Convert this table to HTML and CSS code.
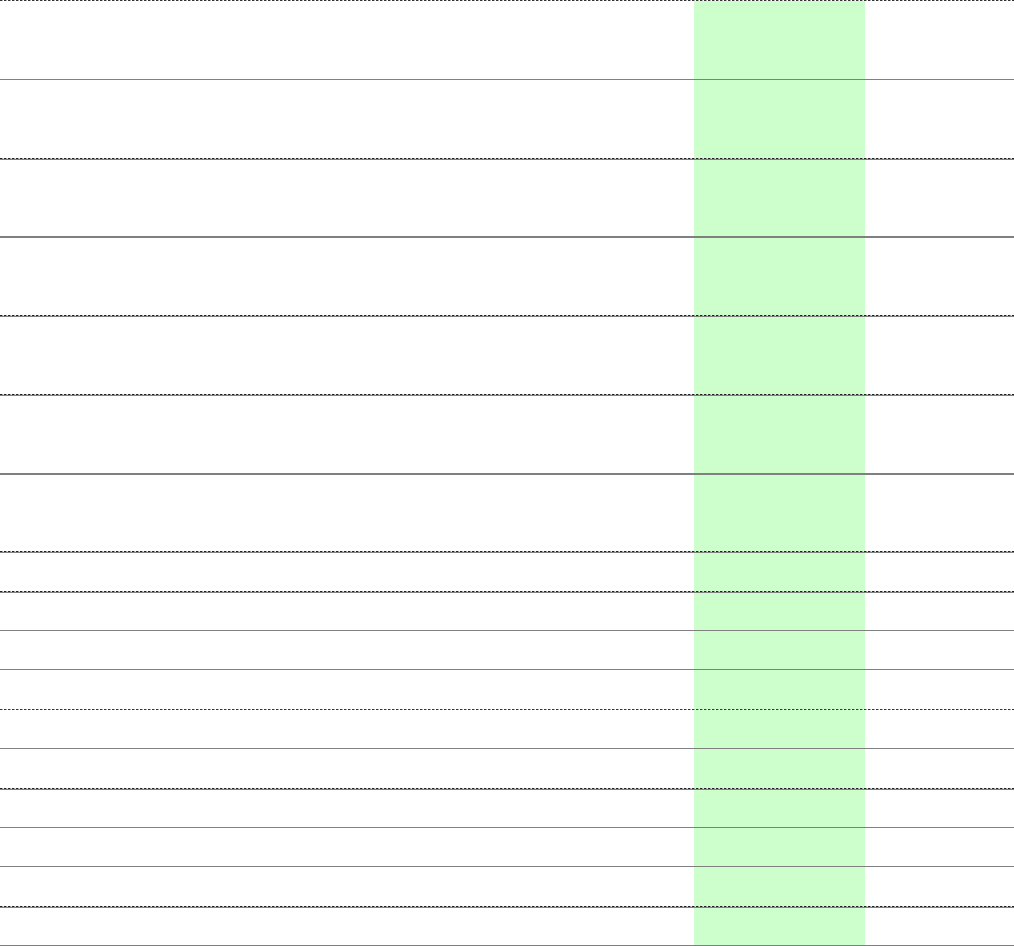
FILE: index.html
```html
<!DOCTYPE html>
<html>
<head>
<meta charset="utf-8">
<link rel="stylesheet" href="styles.css">
</head>
<body>
<div class="table">
  <div class="row tall"><div class="line dash"></div><div class="cells"><div></div><div class="mid"></div><div></div></div></div>
  <div class="row tall"><div class="line solid"></div><div class="cells"><div></div><div class="mid"></div><div></div></div></div>
  <div class="row tall"><div class="line dash-solid"></div><div class="cells"><div></div><div class="mid"></div><div></div></div></div>
  <div class="row tall"><div class="line solid2"></div><div class="cells"><div></div><div class="mid"></div><div></div></div></div>
  <div class="row tall"><div class="line dash-solid"></div><div class="cells"><div></div><div class="mid"></div><div></div></div></div>
  <div class="row tall"><div class="line dash-solid"></div><div class="cells"><div></div><div class="mid"></div><div></div></div></div>
  <div class="row tall"><div class="line solid2"></div><div class="cells"><div></div><div class="mid"></div><div></div></div></div>
  <div class="row short"><div class="line dash-solid"></div><div class="cells"><div></div><div class="mid"></div><div></div></div></div>
  <div class="row short"><div class="line dash-solid"></div><div class="cells"><div></div><div class="mid"></div><div></div></div></div>
  <div class="row short"><div class="line solid"></div><div class="cells"><div></div><div class="mid"></div><div></div></div></div>
  <div class="row short"><div class="line solid"></div><div class="cells"><div></div><div class="mid"></div><div></div></div></div>
  <div class="row short"><div class="line dash"></div><div class="cells"><div></div><div class="mid"></div><div></div></div></div>
  <div class="row short"><div class="line solid"></div><div class="cells"><div></div><div class="mid"></div><div></div></div></div>
  <div class="row short"><div class="line dash-solid"></div><div class="cells"><div></div><div class="mid"></div><div></div></div></div>
  <div class="row short"><div class="line solid"></div><div class="cells"><div></div><div class="mid"></div><div></div></div></div>
  <div class="row short"><div class="line solid"></div><div class="cells"><div></div><div class="mid"></div><div></div></div></div>
  <div class="row short"><div class="line dash-solid"></div><div class="cells"><div></div><div class="mid"></div><div></div></div></div>
  <div class="line solid"></div>
</div>
</body>
</html>
```
FILE: styles.css
```css
html, body {
  margin: 0;
  padding: 0;
  background: #ffffff;
  font-family: "Liberation Sans", Arial, sans-serif;
}
.table {
  display: flex;
  flex-direction: column;
  width: 1014px;
}
.row {
  display: flex;
  flex-direction: column;
  box-sizing: border-box;
}
.row.tall { height: 78.75px; }
.row.short { height: 39.4px; }
.cells {
  flex: 1;
  display: grid;
  grid-template-columns: 694px 171px 1fr;
}
.cells .mid {
  background: #ccffcc;
}
.line {
  flex: none;
  width: 100%;
}
.line.solid {
  height: 1px;
  background: #808080;
}
.line.solid2 {
  height: 2px;
  background: #808080;
}
.line.dash {
  height: 1px;
  background: repeating-linear-gradient(90deg, #333 0 2px, #aaa 2px 3px, #fff 3px 4px);
}
.line.dash-solid {
  height: 2px;
  background:
    repeating-linear-gradient(90deg, #222 0 2px, #999 2px 3px, #ddd 3px 4px) top / 100% 1px no-repeat,
    #808080;
}
```
